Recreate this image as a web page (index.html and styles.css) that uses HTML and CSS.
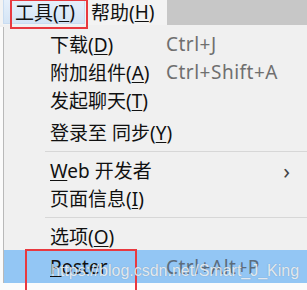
FILE: index.html
```html
<!DOCTYPE html>
<html lang="zh-CN">
<head>
    <meta charset="UTF-8">
    <title>工具菜单</title>
    <link rel="stylesheet" href="styles.css">
</head>
<body>
    <div class="screen">
        <div class="menubar">
            <div class="menu-titles">
                <span class="menu-title active">工具(<u>T</u>)</span>
                <span class="menu-title">帮助(<u>H</u>)</span>
            </div>
            <div class="menubar-rest"></div>
        </div>

        <div class="dropdown">
            <div class="item"><span class="label">下载(<u>D</u>)</span><span class="key">Ctrl+J</span></div>
            <div class="item"><span class="label">附加组件(<u>A</u>)</span><span class="key">Ctrl+Shift+A</span></div>
            <div class="item"><span class="label">发起聊天(<u>T</u>)</span></div>
            <div class="item gap"><span class="label">登录至 同步(<u>Y</u>)</span></div>
            <div class="sep"></div>
            <div class="item"><span class="label"><u>W</u>eb 开发者</span><span class="arrow">&#8250;</span></div>
            <div class="item"><span class="label">页面信息(<u>I</u>)</span></div>
            <div class="sep"></div>
            <div class="item"><span class="label">选项(<u>O</u>)</span></div>
            <div class="item hover"><span class="label"><u>P</u>oster</span><span class="key">Ctrl+Alt+P</span></div>
        </div>

        <div class="mark mark-menu"></div>
        <div class="mark mark-poster"></div>
        <div class="watermark">https://blog.csdn.net/Smart_J_King</div>
    </div>
</body>
</html>
```

FILE: styles.css
```css
* { margin: 0; padding: 0; box-sizing: border-box; }
body { background: #fbfbfb; font-family: "Noto Sans", "Noto Sans CJK SC", sans-serif; color: #111; }

.screen {
    position: relative;
    width: 307px;
    height: 290px;
    overflow: hidden;
}

/* menu bar */
.menubar {
    display: flex;
    height: 27px;
    background: #f0f0f0;
}

.menu-titles {
    display: flex;
    width: 167px;
    height: 25px;
    background: #f3f3f3;
    padding-left: 3px;
}

.menu-title {
    display: flex;
    align-items: center;
    height: 24px;
    padding: 0 8px 0 11px;
    font-size: 19px;
    line-height: normal;
    white-space: nowrap;
}

.menu-title.active {
    width: 82px;
    background: linear-gradient(#e6f0fb, #d4e4f5);
    border: 1px solid #c9dcf1;
    border-top: none;
}

.menu-title + .menu-title { padding-left: 6px; }

.menubar-rest {
    flex: 1;
    height: 25px;
    background: #c7c7c7;
}

u { text-decoration-thickness: 1px; text-underline-offset: 2px; }

/* dropdown */
.dropdown {
    margin-left: 3px;
    height: 256px;
    background: #f0f0f0;
    border-left: 1px solid #b9b9b9;
    padding-top: 3px;
}

.item {
    display: flex;
    align-items: center;
    height: 28px;
    font-size: 19px;
    line-height: normal;
}

.item.gap { margin-top: 4px; }

.label {
    width: 162px;
    padding-left: 46px;
    white-space: nowrap;
}

.key {
    color: #6f6f6f;
    letter-spacing: 0.5px;
    white-space: nowrap;
}

.arrow {
    margin-left: auto;
    margin-right: 17px;
    font-size: 22px;
    color: #444;
}

.sep {
    height: 1px;
    margin: 5px 0 4px 41px;
    background: #d7d7d7;
}

.item.hover {
    height: 33px;
    background: #93c6f4;
}

.item.hover .key { color: #5c6c7c; }

/* red annotation boxes */
.mark {
    position: absolute;
    border: 2px solid #e8393f;
}

.mark-menu { left: 10px; top: -1px; width: 78px; height: 30px; }
.mark-poster { left: 25px; top: 249px; width: 112px; height: 50px; }

.watermark {
    position: absolute;
    left: 51px;
    top: 262px;
    font-family: "Liberation Sans", sans-serif;
    font-size: 16px;
    color: rgba(255, 255, 255, 0.8);
    text-shadow: 0 0 1px rgba(90, 110, 130, 0.6);
    white-space: nowrap;
}
```
